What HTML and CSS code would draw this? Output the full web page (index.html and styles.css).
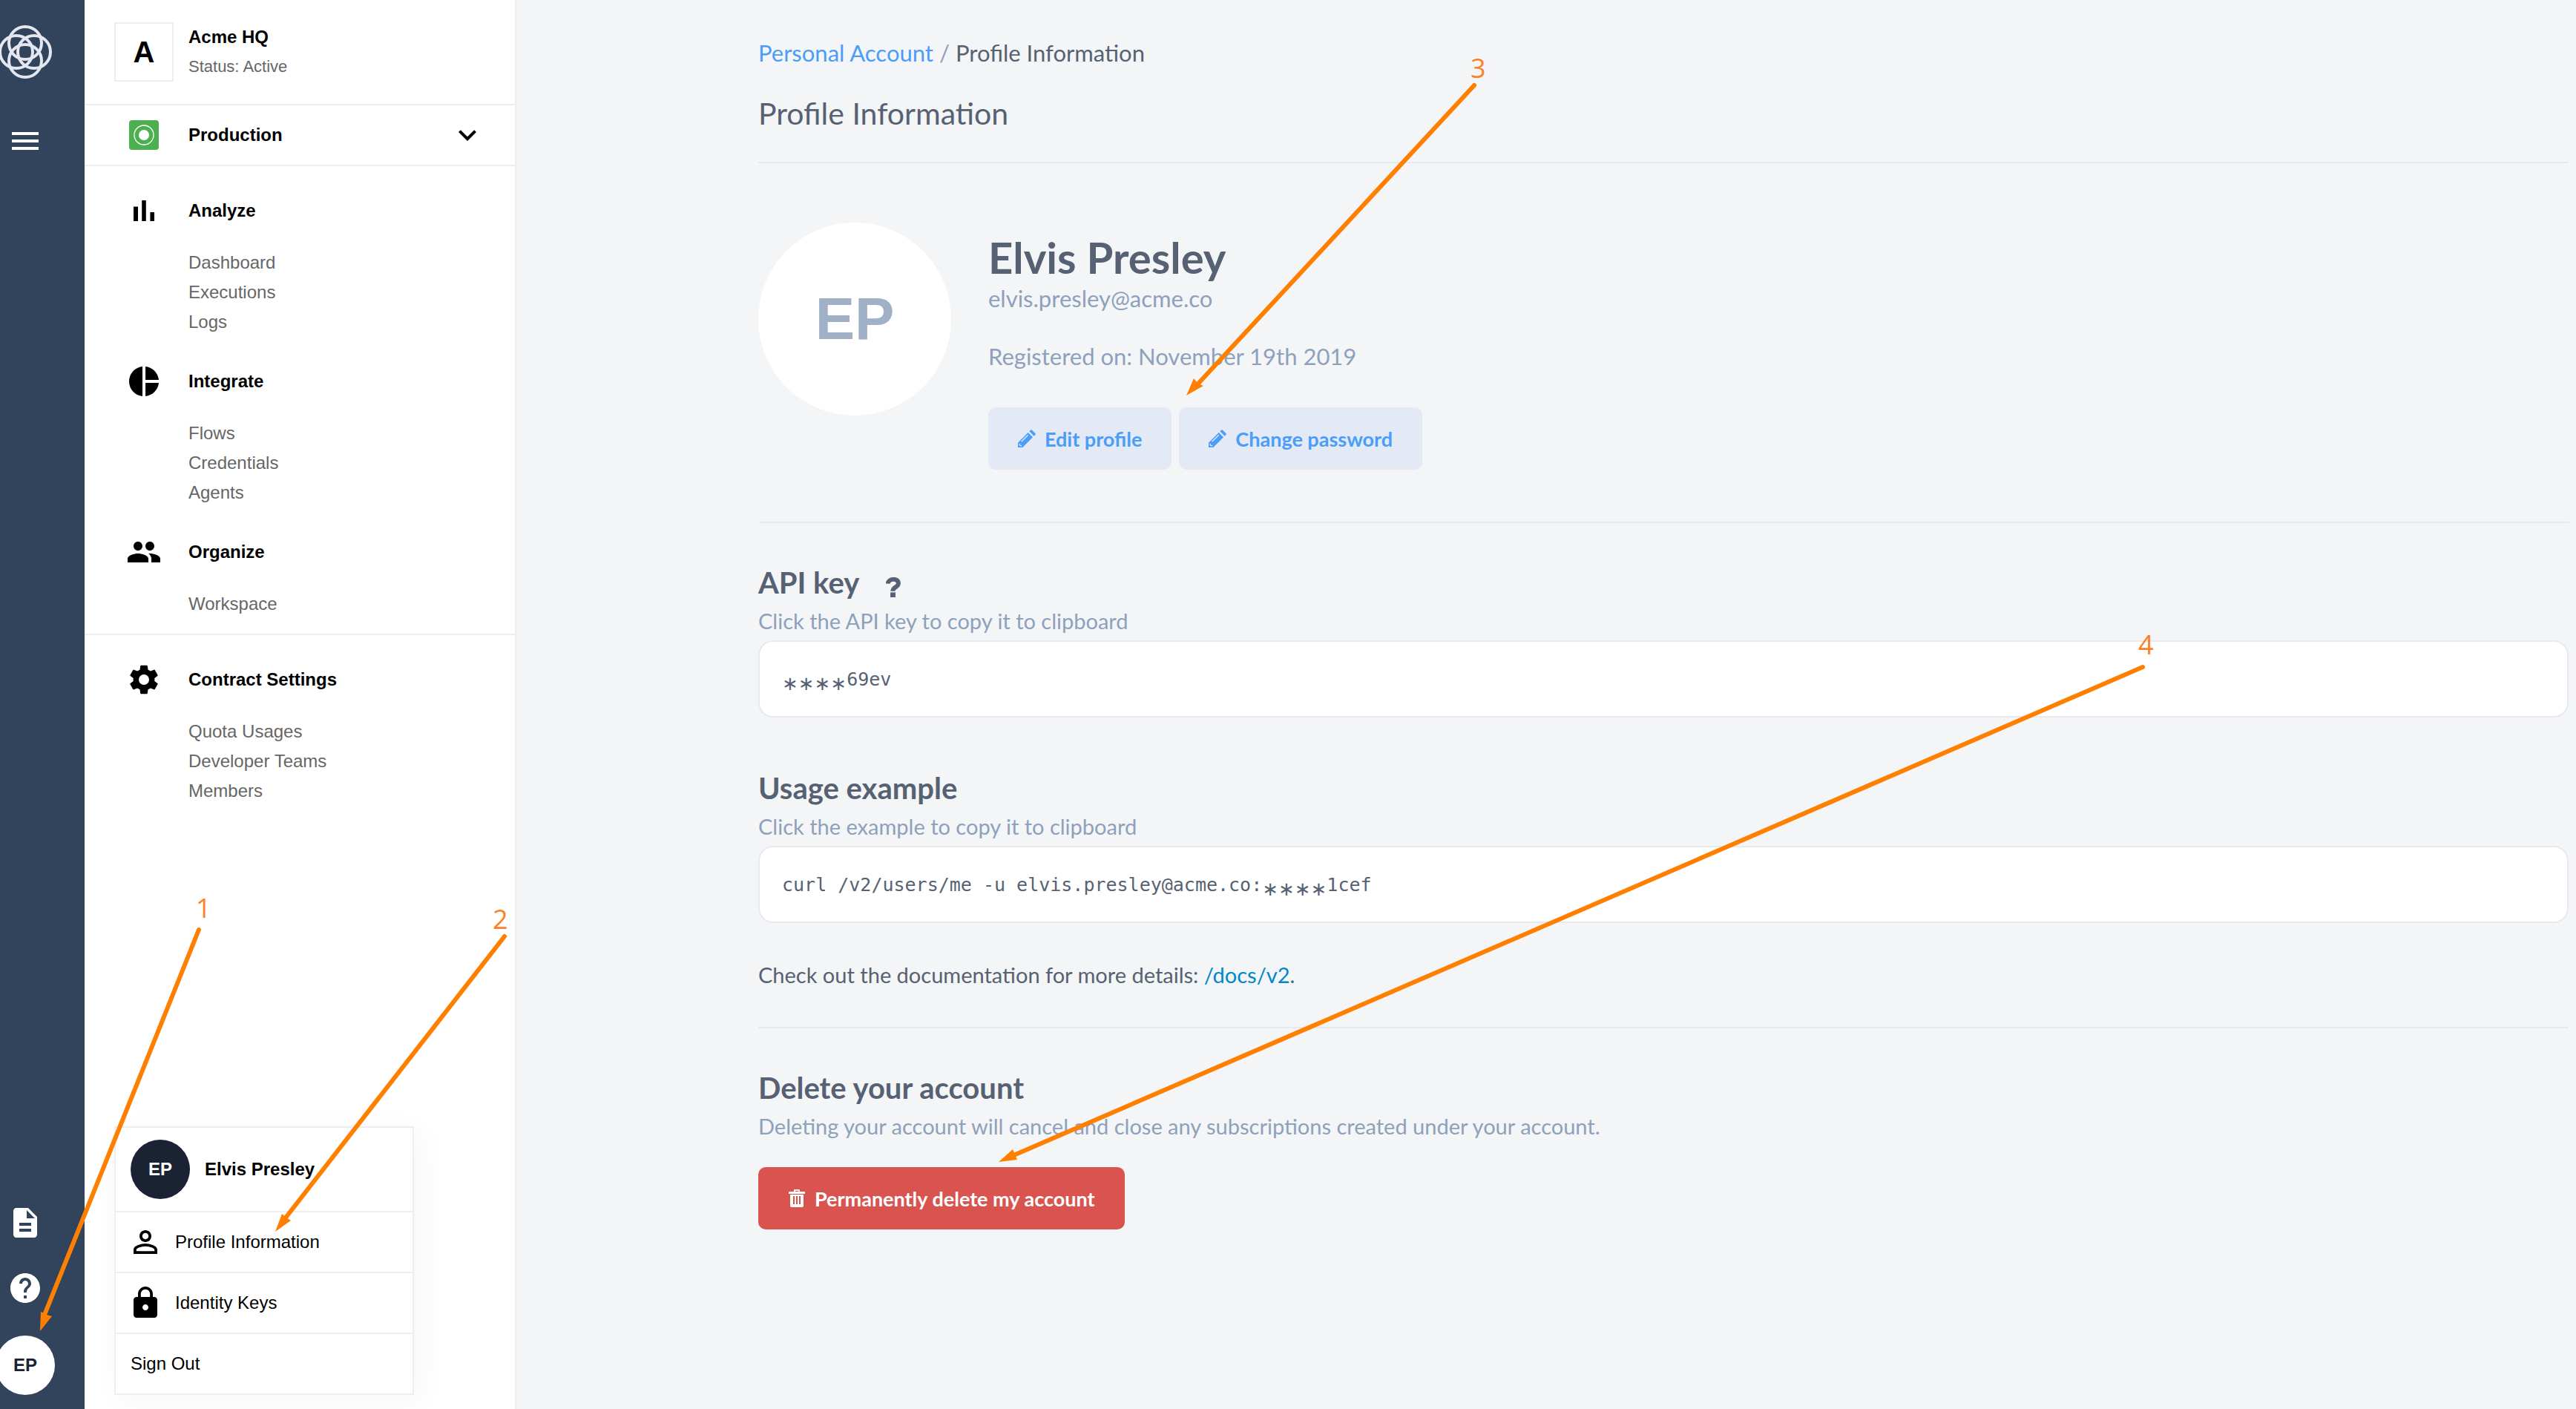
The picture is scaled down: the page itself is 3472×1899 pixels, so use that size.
FILE: index.html
```html
<!DOCTYPE html>
<html lang="en">
<head>
<meta charset="utf-8">
<title>Profile Information</title>
<link rel="stylesheet" href="styles.css">
</head>
<body>
<div class="app">
  <nav class="rail" aria-label="Global">
    <a class="rail-link" href="#" aria-label="Home">
      <svg class="logo" viewBox="0 0 72 72"><g fill="none" stroke="#e4e7ef" stroke-width="4"><circle cx="36" cy="24" r="22"/><circle cx="36" cy="48" r="22"/><circle cx="24" cy="36" r="22"/><circle cx="48" cy="36" r="22"/></g></svg>
    </a>
    <button class="rail-link" type="button" aria-label="Toggle menu">
      <svg class="icon" viewBox="0 0 24 24"><path d="M3 18h18v-2H3v2zm0-5h18v-2H3v2zm0-7v2h18V6H3z"/></svg>
    </button>
    <div class="rail-bottom">
      <a class="rail-link" href="#" aria-label="Documentation">
        <svg class="icon" viewBox="0 0 24 24"><path d="M14 2H6c-1.100 0-1.990.9-1.990 2L4 20c0 1.100.89 2 1.990 2H18c1.100 0 2-.9 2-2V8l-6-6zm2 16H8v-2h8v2zm0-4H8v-2h8v2zm-3-5V3.500L18.500 9H13z"/></svg>
      </a>
      <a class="rail-link" href="#" aria-label="Help">
        <svg class="icon" viewBox="0 0 24 24"><path d="M12 2C6.480 2 2 6.480 2 12s4.480 10 10 10 10-4.480 10-10S17.520 2 12 2zm1 17h-2v-2h2v2zm2.070-7.750l-.9.920C13.450 12.900 13 13.500 13 15h-2v-.5c0-1.100.45-2.100 1.170-2.830l1.240-1.260c.370-.360.590-.860.590-1.410 0-1.100-.9-2-2-2s-2 .9-2 2H8c0-2.210 1.790-4 4-4s4 1.790 4 4c0 .880-.360 1.680-.930 2.250z"/></svg>
      </a>
      <button class="avatar avatar-light" type="button">EP</button>
    </div>
  </nav>

  <aside class="sidebar">
    <header class="org">
      <span class="org-badge">A</span>
      <div>
        <div class="org-name">Acme HQ</div>
        <div class="org-status">Status: Active</div>
      </div>
    </header>
    <button class="env" type="button">
      <span class="nav-icon"><svg class="env-icon" viewBox="0 0 40 40"><rect width="40" height="40" rx="4" fill="#4caf50"/><circle cx="20" cy="20" r="13" fill="none" stroke="#fff" stroke-width="1.300"/><circle cx="20" cy="20" r="7" fill="#fff"/></svg></span>
      <span class="env-name">Production</span>
      <svg class="icon" viewBox="0 0 24 24"><path d="M16.590 8.590L12 13.170 7.410 8.590 6 10l6 6 6-6z"/></svg>
    </button>
    <nav class="groups" aria-label="Workspace">
      <section class="group">
        <h2 class="group-title"><span class="nav-icon"><svg class="icon" viewBox="0 0 24 24"><path d="M5 9.200h3V19H5zM10.600 5h2.800v14h-2.800zm5.600 8H19v6h-2.800z"/></svg></span>Analyze</h2>
        <ul class="links"><li><a href="#">Dashboard</a></li><li><a href="#">Executions</a></li><li><a href="#">Logs</a></li></ul>
      </section>
      <section class="group">
        <h2 class="group-title"><span class="nav-icon"><svg class="icon" viewBox="0 0 24 24"><path d="M11 2v20c-5.070-.5-9-4.790-9-10s3.930-9.500 9-10zm2.030 0v8.990H22c-.470-4.740-4.240-8.520-8.970-8.990zm0 11.010V22c4.740-.470 8.500-4.250 8.970-8.990h-8.970z"/></svg></span>Integrate</h2>
        <ul class="links"><li><a href="#">Flows</a></li><li><a href="#">Credentials</a></li><li><a href="#">Agents</a></li></ul>
      </section>
      <section class="group">
        <h2 class="group-title"><span class="nav-icon"><svg class="icon" viewBox="0 0 24 24"><path d="M16 11c1.660 0 2.990-1.340 2.990-3S17.660 5 16 5c-1.660 0-3 1.340-3 3s1.340 3 3 3zm-8 0c1.660 0 2.990-1.340 2.990-3S9.660 5 8 5C6.340 5 5 6.340 5 8s1.340 3 3 3zm0 2c-2.330 0-7 1.170-7 3.500V19h14v-2.500c0-2.330-4.670-3.500-7-3.500zm8 0c-.290 0-.620.020-.970.050 1.160.840 1.970 1.970 1.970 3.450V19h6v-2.500c0-2.330-4.670-3.500-7-3.500z"/></svg></span>Organize</h2>
        <ul class="links"><li><a href="#">Workspace</a></li></ul>
      </section>
    </nav>
    <nav class="groups groups-divided" aria-label="Contract">
      <section class="group">
        <h2 class="group-title"><span class="nav-icon"><svg class="icon" viewBox="0 0 24 24"><path d="M19.140 12.940c.040-.3.060-.610.060-.940 0-.320-.020-.640-.070-.940l2.030-1.580c.180-.140.230-.410.120-.610l-1.920-3.320c-.120-.220-.370-.290-.590-.220l-2.390.960c-.5-.380-1.030-.7-1.620-.940l-.360-2.540c-.040-.240-.240-.410-.480-.410h-3.840c-.240 0-.430.170-.470.410l-.360 2.540c-.590.240-1.130.570-1.620.940l-2.390-.960c-.220-.080-.470 0-.590.220L2.740 8.870c-.120.210-.080.470.120.610l2.030 1.580c-.050.3-.090.630-.090.940s.020.640.070.940l-2.030 1.580c-.180.140-.230.410-.120.610l1.920 3.320c.120.220.370.290.590.220l2.390-.960c.5.380 1.030.7 1.620.940l.360 2.540c.050.240.240.410.480.410h3.840c.240 0 .440-.170.470-.410l.360-2.540c.590-.240 1.130-.560 1.620-.940l2.390.960c.220.080.470 0 .590-.220l1.920-3.320c.120-.220.070-.470-.120-.610l-2.010-1.580zM12 15.500a3.500 3.500 0 1 1 0-7 3.500 3.500 0 0 1 0 7z"/></svg></span>Contract Settings</h2>
        <ul class="links"><li><a href="#">Quota Usages</a></li><li><a href="#">Developer Teams</a></li><li><a href="#">Members</a></li></ul>
      </section>
    </nav>
  </aside>

  <div class="user-menu">
    <div class="menu-head"><span class="avatar avatar-dark">EP</span>Elvis Presley</div>
    <a class="menu-item" href="#"><svg class="icon" viewBox="0 0 24 24"><path d="M12 5.900c1.160 0 2.100.940 2.100 2.100s-.940 2.100-2.100 2.100S9.900 9.160 9.900 8s.940-2.100 2.100-2.100m0 9c2.970 0 6.100 1.460 6.100 2.100v1.100H5.900V17c0-.640 3.130-2.100 6.100-2.100M12 4C9.790 4 8 5.790 8 8s1.790 4 4 4 4-1.790 4-4-1.790-4-4-4zm0 9c-2.670 0-8 1.340-8 4v3h16v-3c0-2.660-5.330-4-8-4z"/></svg>Profile Information</a>
    <a class="menu-item" href="#"><svg class="icon" viewBox="0 0 24 24"><path d="M18 8h-1V6c0-2.760-2.240-5-5-5S7 3.240 7 6v2H6c-1.100 0-2 .9-2 2v10c0 1.100.9 2 2 2h12c1.100 0 2-.9 2-2V10c0-1.100-.9-2-2-2zm-6 9c-1.100 0-2-.9-2-2s.9-2 2-2 2 .9 2 2-.9 2-2 2zm3.100-9H8.900V6c0-1.710 1.390-3.100 3.100-3.100 1.710 0 3.100 1.390 3.100 3.100v2z"/></svg>Identity Keys</a>
    <a class="menu-item menu-item-plain" href="#">Sign Out</a>
  </div>

  <main class="content">
    <div class="breadcrumb"><a href="#">Personal Account</a><span class="sep">/</span><span>Profile Information</span></div>
    <h1 class="page-title">Profile Information</h1>
    <section class="profile">
      <div class="portrait">EP</div>
      <div class="profile-info">
        <h2 class="profile-name">Elvis Presley</h2>
        <div class="profile-line">elvis.presley@acme.co</div>
        <div class="profile-line profile-date">Registered on: November 19th 2019</div>
        <div class="actions">
          <button class="btn btn-soft" type="button"><svg class="btn-icon" viewBox="0 0 72 72"><path d="M0 53L41 12l19 19-41 41H0zM46 7l5-5q3-3 6 0l13 13q3 3 0 6l-5 5z"/><path d="M14 49l27-27M6 57l2 7 7 2" fill="none" stroke="#e3eaf6" stroke-width="4"/></svg>Edit profile</button>
          <button class="btn btn-soft" type="button"><svg class="btn-icon" viewBox="0 0 72 72"><path d="M0 53L41 12l19 19-41 41H0zM46 7l5-5q3-3 6 0l13 13q3 3 0 6l-5 5z"/><path d="M14 49l27-27M6 57l2 7 7 2" fill="none" stroke="#e3eaf6" stroke-width="4"/></svg>Change password</button>
        </div>
      </div>
    </section>

    <div class="divided">
      <section>
        <h2 class="section-title">API key<svg class="hint" viewBox="0 0 60 82" role="img" aria-label="Help"><path d="M8 26C9 4 51 2 51 25C51 41 28 40 28 57" fill="none" stroke="currentColor" stroke-width="18"/><path d="M18 62h21v20H18z" fill="currentColor"/></svg></h2>
        <p class="caption">Click the API key to copy it to clipboard</p>
        <button class="copy-box" type="button"><span class="mask">∗∗∗∗</span>69ev</button>
      </section>
      <section class="usage">
        <h2 class="section-title">Usage example</h2>
        <p class="caption">Click the example to copy it to clipboard</p>
        <button class="copy-box" type="button">curl /v2/users/me -u elvis.presley@acme.co:<span class="mask">∗∗∗∗</span>1cef</button>
      </section>
      <p class="docs">Check out the documentation for more details: <a href="#">/docs/v2</a>.</p>
    </div>

    <section class="divided">
      <h2 class="section-title">Delete your account</h2>
      <p class="caption">Deleting your account will cancel and close any subscriptions created under your account.</p>
      <button class="btn btn-danger" type="button"><svg class="btn-icon" viewBox="0 0 24 24"><path d="M8 3V1q0-1 1-1h6q1 0 1 1v2h6q1 0 1 1v2H1V4q0-1 1-1zm2 0h4V2h-4zM3 7h18v15q0 2-2 2H5q-2 0-2-2z"/><path d="M8 9v11M12 9v11M16 9v11" stroke="#d9534f" stroke-width="2"/></svg>Permanently delete my account</button>
    </section>
  </main>

  <svg class="callouts" aria-hidden="true">
    <g class="callout-line">
      <path d="M268 1253L60 1772"/><path d="M680 1262L382 1645"/><path d="M1987 115L1614 518"/><path d="M2888 899L1364 1558"/>
    </g>
    <g class="callout-head">
      <path d="M54 1794L55 1768L63 1772L70 1774z"/><path d="M371 1660L380 1636L386 1641L392 1645z"/><path d="M1599 533L1609 510L1615 517L1622 520z"/><path d="M1346 1566L1365 1549L1368 1556L1371 1563z"/>
    </g>
    <g class="callout-text">
      <text x="264" y="1237">1</text><text x="664" y="1252">2</text><text x="1982" y="105">3</text><text x="2882" y="882">4</text>
    </g>
  </svg>
</div>
</body>
</html>
```
FILE: styles.css
```css
* { box-sizing: border-box; }

body {
  margin: 0;
  background: #f4f5f7;
  color: #566273;
  font-family: Lato, "Open Sans", sans-serif;
}

h1, h2, p, ul { margin: 0; padding: 0; }
ul { list-style: none; }
a { text-decoration: none; color: inherit; }
button { border: 0; background: none; padding: 0; font: inherit; color: inherit; cursor: pointer; text-align: left; }
svg { display: block; flex: none; }

.app { position: relative; display: flex; min-height: 100vh; overflow: hidden; }
.icon { width: 48px; height: 48px; fill: currentColor; }

/* Rail */
.rail {
  display: flex;
  flex: none;
  flex-direction: column;
  align-items: center;
  gap: 60px;
  width: 114px;
  padding: 34px 46px 19px 0;
  background: #32445b;
  color: #fff;
}
.logo { width: 72px; height: 72px; }
.rail-bottom { display: flex; flex-direction: column; align-items: center; gap: 40px; margin-top: auto; }

.avatar {
  display: flex;
  flex: none;
  align-items: center;
  justify-content: center;
  width: 80px;
  height: 80px;
  border-radius: 50%;
  font: bold 24px "Liberation Sans", Arial, sans-serif;
}
.avatar-light { background: #fff; color: #1a2334; }
.avatar-dark { background: #1a2334; color: #fff; }

/* Sidebar */
.sidebar {
  flex: none;
  width: 582px;
  border-right: 2px solid #eee;
  background: #fff;
  color: #000;
  font: 24px/40px "Liberation Sans", Arial, sans-serif;
}
.org { display: flex; gap: 20px; padding: 30px 40px; border-bottom: 2px solid #eee; }
.org-badge { display: flex; align-items: center; justify-content: center; width: 80px; height: 80px; border: 2px solid #eee; font-size: 40px; font-weight: bold; }
.org-name { font-weight: bold; }
.org-status { color: #666; font-size: 22px; }
.env { display: flex; align-items: center; width: 100%; height: 82px; padding: 0 40px; border-bottom: 2px solid #eee; }
.env-name { flex: 1; font-weight: bold; }
.env-icon { width: 40px; height: 40px; }
.nav-icon { display: flex; justify-content: center; width: 80px; margin-right: 20px; }
.groups { padding: 20px 0 0; }
.groups-divided { border-top: 2px solid #eee; }
.group { padding: 0 40px 20px; }
.group-title { display: flex; align-items: center; height: 80px; font-size: 24px; }
.links { padding: 10px 0 0 100px; color: #666; }

/* User menu */
.user-menu {
  position: absolute;
  left: 154px;
  bottom: 19px;
  width: 404px;
  border: 2px solid #eee;
  background: #fff;
  box-shadow: 8px 8px 40px rgba(0, 0, 0, 0.04);
  color: #000;
  font: 24px "Liberation Sans", Arial, sans-serif;
}
.menu-head { display: flex; align-items: center; gap: 20px; padding: 16px 20px; font-weight: bold; }
.menu-item { display: flex; align-items: center; gap: 16px; height: 82px; padding: 0 16px; border-top: 2px solid #eee; }
.menu-item-plain { padding: 0 20px; }

/* Content */
.content { flex: 1; min-width: 0; padding: 51px 10px 80px 326px; }
.breadcrumb { display: flex; gap: 8px; font-size: 31px; line-height: 40px; }
.breadcrumb a { color: #4a9df8; }
.sep { color: #8ea1bc; }
.page-title { margin-top: 38px; padding-bottom: 41px; border-bottom: 2px solid #e7eaed; font-size: 41px; font-weight: normal; line-height: 48px; }

.profile { display: flex; gap: 50px; margin: 80px 0 70px; }
.portrait {
  display: flex;
  flex: none;
  align-items: center;
  justify-content: center;
  width: 260px;
  height: 260px;
  border-radius: 50%;
  background: #fff;
  color: #9fb0c7;
  font: bold 80px "Liberation Sans", Arial, sans-serif;
}
.profile-info { padding-top: 12px; }
.profile-name { font-size: 58px; line-height: 70px; }
.profile-line { color: #8ea1bc; font-size: 31px; line-height: 40px; }
.profile-date { margin-top: 38px; }
.actions { display: flex; gap: 10px; margin-top: 49px; }

.btn { display: flex; align-items: center; gap: 12px; height: 84px; padding: 0 40px; border-radius: 10px; font-size: 27px; font-weight: bold; }
.btn-icon { width: 24px; height: 24px; fill: currentColor; }
.btn-soft { background: #e3eaf6; color: #4a9df8; }
.btn-danger { margin-top: 35px; background: #d9534f; color: #fff; }

.divided { padding-top: 56px; border-top: 2px solid #e7eaed; }
.section-title { display: flex; align-items: center; gap: 36px; font-size: 40px; line-height: 48px; }
.hint { width: 20px; height: 27px; margin-top: 12px; }
.caption { margin-top: 8px; color: #8ea1bc; font-size: 29px; line-height: 40px; }
.usage { margin-top: 71px; }
.copy-box {
  display: block;
  width: 100%;
  height: 104px;
  margin-top: 6px;
  padding: 0 30px;
  border: 2px solid #e7eaee;
  border-radius: 20px;
  background: #fff;
  font-family: "DejaVu Sans Mono", monospace;
  font-size: 25px;
}
.mask { font-family: "DejaVu Sans", sans-serif; font-size: 26px; line-height: 0; vertical-align: sub; }
.docs { margin: 50px 0; font-size: 29px; line-height: 40px; }
.docs a { color: #0088cc; }

/* Numbered callouts over the page */
.callouts { position: absolute; inset: 0; width: 100%; height: 100%; pointer-events: none; }
.callout-line { fill: none; stroke: #ff8000; stroke-width: 6px; stroke-linecap: round; }
.callout-head { fill: #ff8000; }
.callout-text { fill: #ff7f27; font: 36px "Open Sans", sans-serif; }
```
